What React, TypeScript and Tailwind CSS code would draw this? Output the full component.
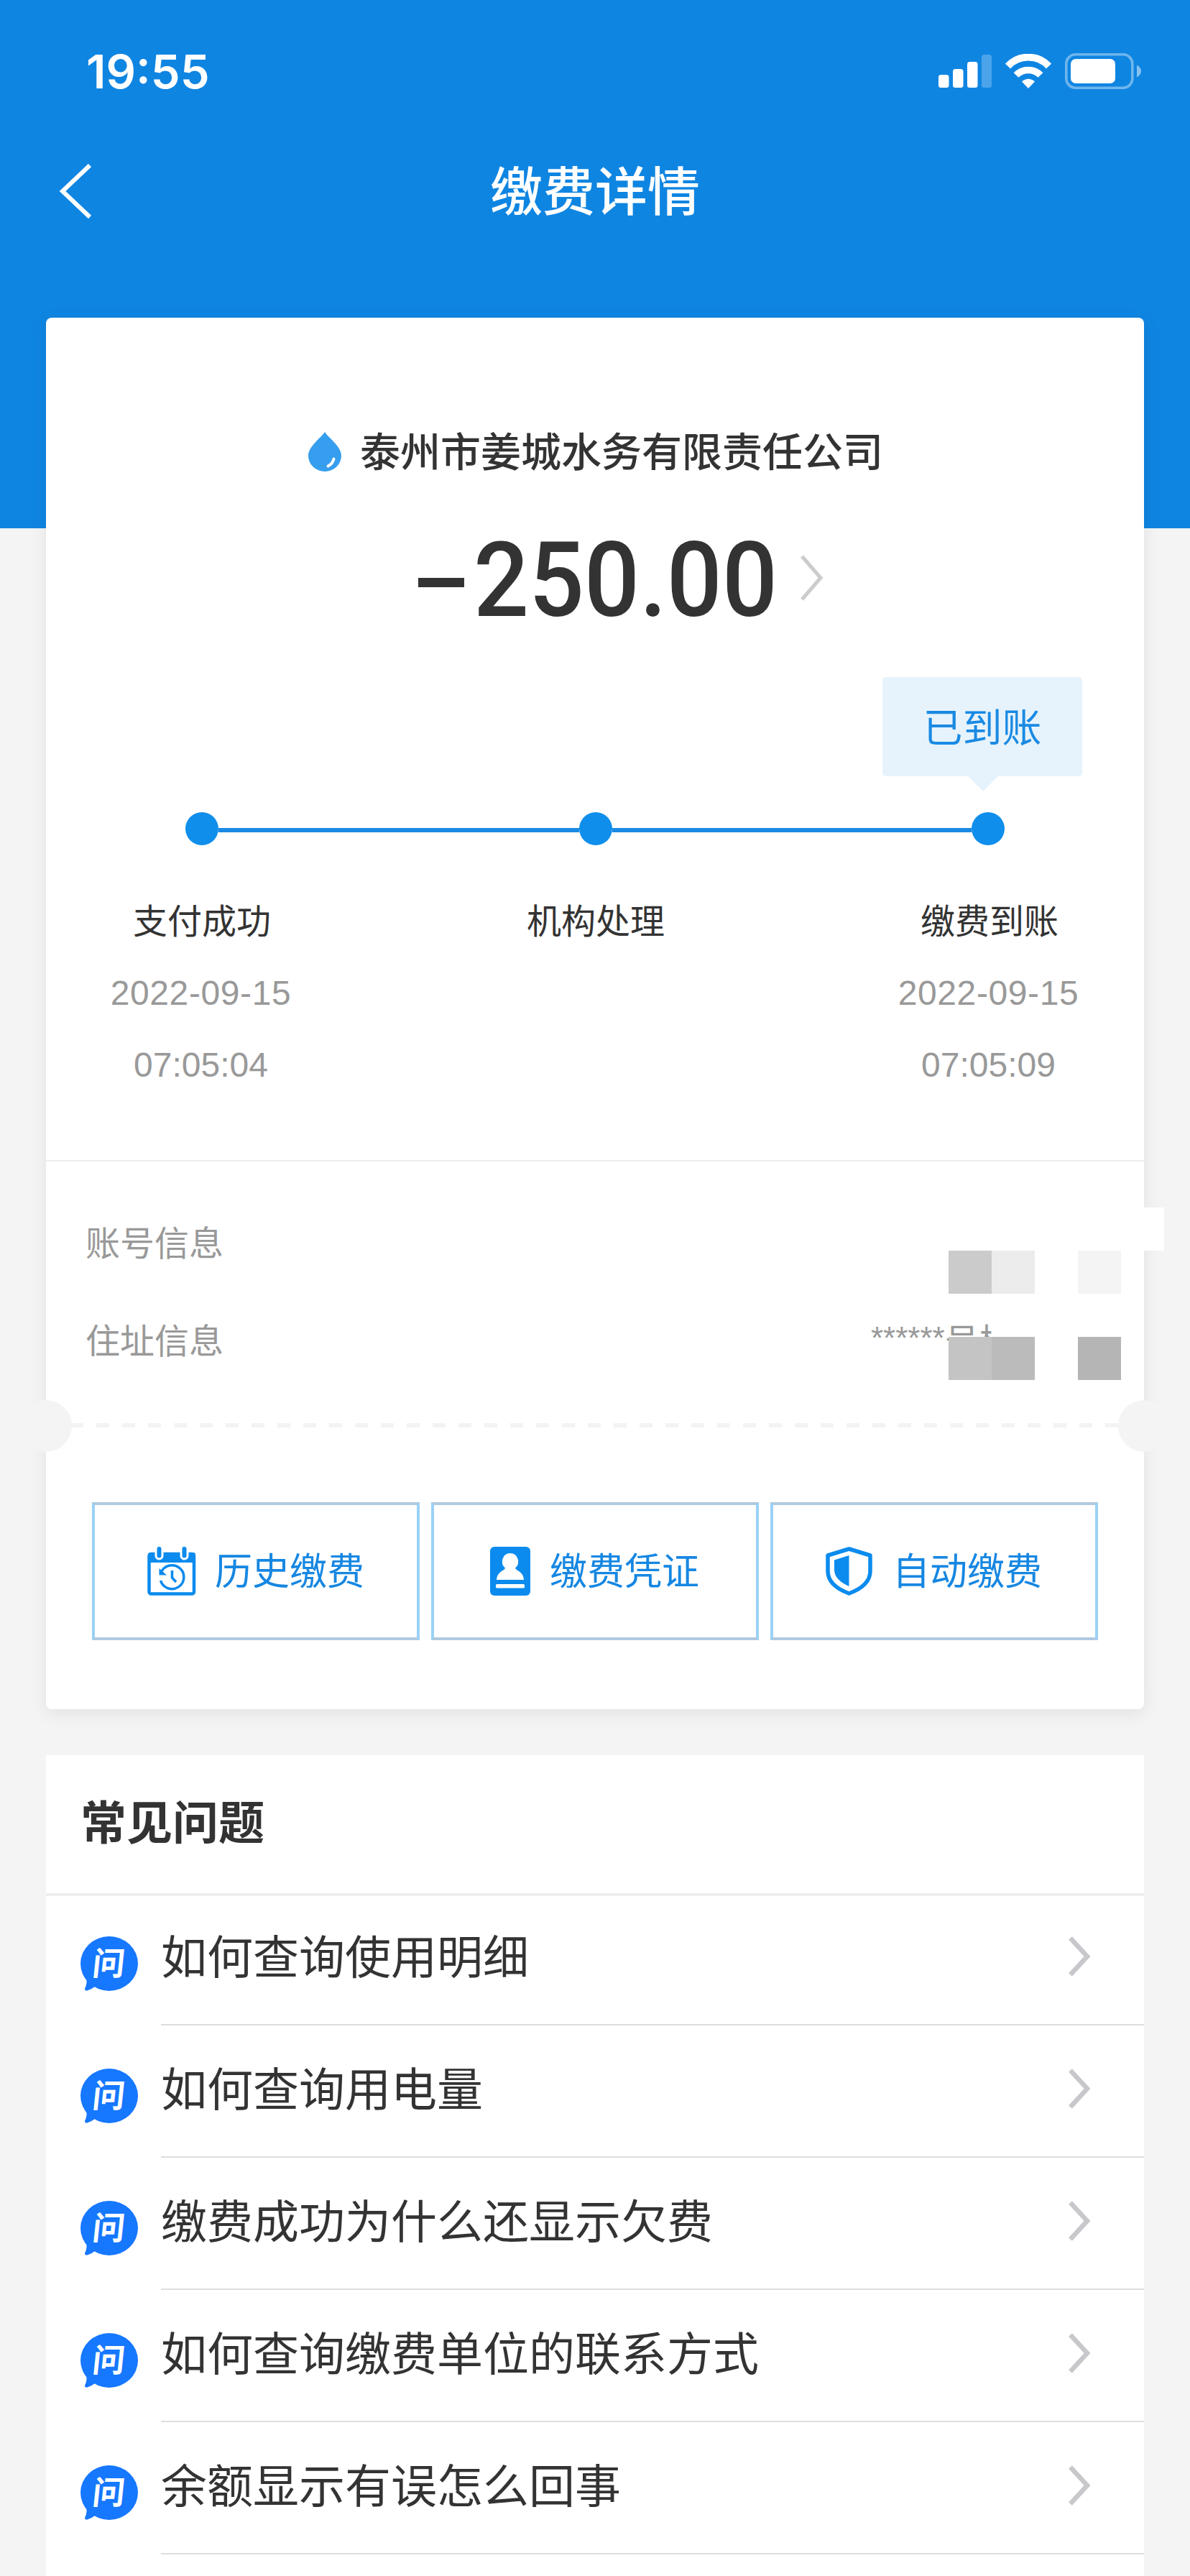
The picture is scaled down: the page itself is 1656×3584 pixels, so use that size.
import React from "react";

const dots = ["支付成功", "机构处理", "缴费到账"];
const dates: [string, string][] = [["2022-09-15", "07:05:04"], ["", ""], ["2022-09-15", "07:05:09"]];

function Signal() {
  return (
    <svg width="74" height="46" viewBox="0 0 74 46" fill="#fff">
      <rect x="0" y="28" width="14.5" height="18" rx="3.5" />
      <rect x="20" y="20" width="14.5" height="26" rx="3.5" />
      <rect x="40" y="10" width="14.5" height="36" rx="3.5" />
      <rect x="60" y="0" width="14" height="46" rx="3.5" opacity="0.25" />
    </svg>
  );
}

function Wifi() {
  return (
    <svg width="64" height="48" viewBox="0 0 64 48" fill="none">
      <path d="M3.500 17A39 39 0 0 1 60.500 17" stroke="#fff" strokeWidth="10" />
      <path d="M15 29.500A24 24 0 0 1 49 29.500" stroke="#fff" strokeWidth="9.500" />
      <path d="M32 48L23 38.500Q32 31 41 38.500Z" fill="#fff" />
    </svg>
  );
}

function Battery() {
  return (
    <svg width="107" height="50" viewBox="0 0 107 50" fill="none">
      <rect x="1.800" y="1.800" width="92" height="46.400" rx="13" stroke="#fff" strokeOpacity="0.4" strokeWidth="3.600" />
      <rect x="8" y="8" width="62" height="34" rx="7" fill="#fff" />
      <path d="M100 16.500Q106 20 106 25T100 33.500Z" fill="#fff" opacity="0.5" />
    </svg>
  );
}

function Drop() {
  return (
    <svg width="46" height="55" viewBox="0 0 46 55">
      <path d="M23 0C28 8 46 20 46 33A23 22 0 0 1 0 33C0 20 18 8 23 0Z" fill="#369eee" />
      <path d="M35.500 37.500Q34 44 27.500 47.500" stroke="#fff" strokeWidth="4" strokeLinecap="round" fill="none" />
    </svg>
  );
}

function CalendarIcon() {
  return (
    <svg width="68" height="68" viewBox="0 0 68 68" fill="none">
      <rect x="2.500" y="10" width="62.500" height="55.500" rx="3" stroke="#0b8bee" strokeWidth="4.500" />
      <path d="M1 22V11Q1 8 4 8H64Q67 8 67 11V22Z" fill="#0b8bee" />
      <path d="M16.500 3V12.500M51.500 3V12.500" stroke="#fff" strokeWidth="12" strokeLinecap="round" />
      <path d="M16.500 3V12.500M51.500 3V12.500" stroke="#0b8bee" strokeWidth="6" strokeLinecap="round" />
      <path d="M19 36A16.500 16.500 0 1 1 18.500 47" stroke="#0b8bee" strokeWidth="3.500" />
      <path d="M16.500 30V39.500H27Z" fill="#0b8bee" />
      <path d="M34.500 33V43L40 49" stroke="#0b8bee" strokeWidth="3.500" />
    </svg>
  );
}

function VoucherIcon() {
  return (
    <svg width="56" height="68" viewBox="0 0 56 68">
      <rect width="56" height="68" rx="6" fill="#0b8bee" />
      <path d="M28 9A11 11.500 0 0 1 35 29.500Q35.500 31.500 40 34Q47 38.500 47 46H9Q9 38.500 16 34Q20.500 31.500 21 29.500A11 11.500 0 0 1 28 9Z" fill="#fff" />
      <rect x="8" y="52" width="40" height="5.500" rx="1.500" fill="#fff" />
    </svg>
  );
}

function ShieldIcon() {
  return (
    <svg width="65" height="68" viewBox="0 0 65 68" fill="none">
      <path d="M32.500 3L62 12V34Q62 54 32.500 65Q3 54 3 34V12Z" stroke="#0b8bee" strokeWidth="5.500" strokeLinejoin="round" />
      <path d="M32.500 12V55Q12 46 12 32V18.500Z" fill="#0b8bee" />
    </svg>
  );
}

function QuestionBadge() {
  return (
    <div className="relative flex h-[76px] w-20 items-center justify-center">
      <svg className="absolute inset-0" width="80" height="76" viewBox="0 0 80 76">
        <ellipse cx="40" cy="38" rx="40" ry="38" fill="#1677ff" />
        <path d="M8 56Q10 65 6 73Q6 76 9.500 75.500Q15 74 20 70L24 60Z" fill="#1677ff" />
      </svg>
      <span className="relative -skew-x-6 text-[45px] font-bold leading-none text-white">问</span>
    </div>
  );
}

const actions = [
  { label: "历史缴费", icon: <CalendarIcon />, pad: "pl-[73px]", gap: "gap-[26px]" },
  { label: "缴费凭证", icon: <VoucherIcon />, pad: "pl-[78px]", gap: "gap-[27px]" },
  { label: "自动缴费", icon: <ShieldIcon />, pad: "pl-[73px]", gap: "gap-[28px]" },
];

const questions = [
  "如何查询使用明细",
  "如何查询用电量",
  "缴费成功为什么还显示欠费",
  "如何查询缴费单位的联系方式",
  "余额显示有误怎么回事",
];

export default function App() {
  return (
    <div className="h-[3584px] w-[1656px] overflow-hidden bg-[#f4f4f4] font-['Liberation_Sans','Noto_Sans_CJK_SC',sans-serif] text-[#333]">
      <header className="h-[735px] bg-[#0f85e2] text-white">
        <div className="flex h-[200px] items-start justify-between pl-[120px] pr-[67px]">
          <div className="pt-[60px] font-['Inter'] text-[65px] font-semibold leading-[80px]">19:55</div>
          <div className="flex items-center pt-[74px]">
            <Signal />
            <div className="w-[19px]" />
            <Wifi />
            <div className="w-[19px]" />
            <Battery />
          </div>
        </div>
        <div className="grid h-[128px] grid-cols-[200px_1fr_200px] items-center">
          <svg className="ml-[82px]" width="46" height="76" viewBox="0 0 46 76" fill="none">
            <path d="M43 2L5 38L43 74" stroke="#fff" strokeWidth="6" />
          </svg>
          <h1 className="pt-1 text-center text-[73px] font-medium leading-[128px]">缴费详情</h1>
        </div>
      </header>

      <main className="-mt-[293px] px-16">
        <section className="relative h-[1936px] rounded-lg bg-white shadow-[0_6px_24px_rgba(0,0,0,0.08)]">
          <div className="flex h-[1174px] flex-col border-b-2 border-[#eee]">
            <div className="mt-[146px] flex h-[80px] items-center pl-[365px]">
              <Drop />
              <h2 className="ml-[26px] pt-1 text-[56px] font-medium leading-[80px]">泰州市姜城水务有限责任公司</h2>
            </div>
            <div className="mt-[54px] flex h-[164px] items-center pl-[518px]">
              <div className="mt-3 h-[13px] w-16 bg-[#333]" />
              <div className="ml-[13px] w-[424px] origin-left scale-x-[0.935] pt-1.5 font-['Roboto'] text-[145px] font-medium leading-[164px]">250.00</div>
              <svg className="ml-[30px]" width="33" height="64" viewBox="0 0 33 64" fill="none">
                <path d="M3 2L29 32L3 62" stroke="#ccc" strokeWidth="5" />
              </svg>
            </div>
            <div className="ml-[1164px] mt-[56px] w-[278px]">
              <div className="flex h-[138px] items-center justify-center rounded-[5px] bg-[#e7f3fc] pt-1 text-[55px] text-[#1a8ae3]">已到账</div>
              <div className="ml-[119px] h-[21px] w-[42px] bg-[#e7f3fc] [clip-path:polygon(0_0,100%_0,50%_100%)]" />
            </div>
            <div className="mt-[29px] flex h-[46px] items-center pl-[194px]">
              <i className="size-[46px] rounded-full bg-[#108eeb]" />
              <i className="mt-1 h-1.5 w-[502px] bg-[#1a8ae3]" />
              <i className="size-[46px] rounded-full bg-[#108eeb]" />
              <i className="mt-1 h-1.5 w-[500px] bg-[#1a8ae3]" />
              <i className="size-[46px] rounded-full bg-[#108eeb]" />
            </div>
            <div className="mt-[57px] flex justify-between pl-[67px] pr-[65px] text-center text-5xl">
              {dots.map((d, i) => (
                <div key={d} className="w-[300px]">
                  <div className="leading-[100px]">{d}</div>
                  <div className="h-[100px] pr-[3px] text-[48px] leading-[98px] tracking-[0.6px] text-[#999]">{dates[i][0]}</div>
                  <div className="h-[100px] pr-[3px] text-[48px] leading-[98px] text-[#999]">{dates[i][1]}</div>
                </div>
              ))}
            </div>
          </div>

          <div className="h-[319px] px-[55px] pt-[47px] text-5xl text-[#999]">
            <div className="h-[136px] leading-[136px]">账号信息</div>
            <div className="flex h-[136px] justify-between leading-[136px]">
              <span>住址信息</span>
              <span className="mr-[60px] flex w-[265px]">
                <span className="-mt-[5px] text-[44px]">******</span>
                <span>号楼</span>
              </span>
            </div>
          </div>

          <div className="absolute left-[1256px] top-[1238px] grid grid-cols-[60px_60px_60px_60px_60px] grid-rows-[60px_60px_60px_60px]">
            <i className="col-span-5 bg-white" />
            <i className="bg-[#cbcbcb]" /><i className="bg-[#ececec]" /><i /><i className="bg-[#f4f4f4]" /><i />
            <i /><i className="bg-white" /><i className="bg-white" /><i className="bg-white" /><i />
            <i className="bg-[#c4c4c4]" /><i className="bg-[#bbb]" /><i className="bg-white" /><i className="bg-[#b5b5b5]" /><i />
          </div>

          <div className="absolute -left-9 top-[1506px] size-[72px] rounded-full bg-[#f4f4f4]" />
          <div className="absolute -right-9 top-[1506px] size-[72px] rounded-full bg-[#f4f4f4]" />
          <div className="absolute left-[34px] right-[34px] top-[1538px] h-1.5 bg-[repeating-linear-gradient(90deg,#f3f3f3_0_18px,transparent_18px_36px)]" />

          <div className="mt-[155px] grid grid-cols-3 gap-4 px-16">
            {actions.map((a) => (
              <div key={a.label} className={`flex h-48 items-center border-4 border-x-[#9ad1f7] border-y-[#afcadf] text-[52px] text-[#1687e2] ${a.pad} ${a.gap}`}>
                {a.icon}
                <span className="whitespace-nowrap pt-0.5">{a.label}</span>
              </div>
            ))}
          </div>
        </section>

        <section className="mt-16 bg-white">
          <h3 className="h-[196px] border-b-4 border-[#eee] pl-12 text-[64px] font-bold leading-[190px]">常见问题</h3>
          {questions.map((q, i) => (
            <div key={q} className={`flex pl-12 ${i === 0 ? "h-[180px]" : "h-[184px]"}`}>
              <div className={i === 0 ? "pt-14" : "pt-[60px]"}>
                <QuestionBadge />
              </div>
              <div className={`ml-8 flex flex-1 justify-between border-b-2 border-[#ddd] pr-[73px] ${i === 0 ? "pt-14" : "pt-[60px]"}`}>
                <span className="-mt-5 h-24 text-[64px] leading-[100px]">{q}</span>
                <svg width="32" height="56" viewBox="0 0 32 56" fill="none">
                  <path d="M2.500 2.500L26 28L2.500 53.500" stroke="#c7c7cc" strokeWidth="6.500" />
                </svg>
              </div>
            </div>
          ))}
          <div className="h-[100px]" />
        </section>
      </main>
    </div>
  );
}
